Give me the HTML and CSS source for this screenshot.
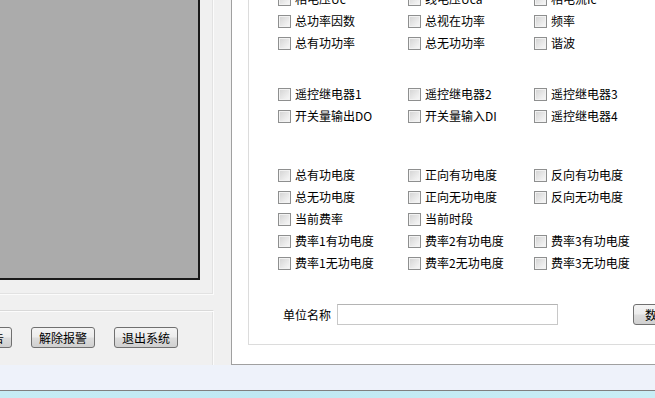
FILE: index.html
```html
<!DOCTYPE html>
<html lang="zh-CN">
<head>
    <meta charset="UTF-8">
    <meta name="viewport" content="width=device-width, initial-scale=1.0">
    <title>参数设置</title>
    <link rel="stylesheet" href="styles.css">
</head>
<body>

    <div class="window">
        <div class="left">
            <div class="view-group">
                <div class="viewer"></div>
            </div>
            <div class="btn-group">
                <button class="btn first">查看报告</button>
                <button class="btn">解除报警</button>
                <button class="btn">退出系统</button>
            </div>
        </div>

        <div class="right">
            <div class="group">
                <div class="grid grid-top">
                    <label class="item"><span class="cb"></span>相电压Uc</label>
                    <label class="item"><span class="cb"></span>线电压Uca</label>
                    <label class="item"><span class="cb"></span>相电流Ic</label>
                    <label class="item"><span class="cb"></span>总功率因数</label>
                    <label class="item"><span class="cb"></span>总视在功率</label>
                    <label class="item"><span class="cb"></span>频率</label>
                    <label class="item"><span class="cb"></span>总有功功率</label>
                    <label class="item"><span class="cb"></span>总无功功率</label>
                    <label class="item"><span class="cb"></span>谐波</label>
                </div>

                <div class="grid grid-relay">
                    <label class="item"><span class="cb"></span>遥控继电器1</label>
                    <label class="item"><span class="cb"></span>遥控继电器2</label>
                    <label class="item"><span class="cb"></span>遥控继电器3</label>
                    <label class="item"><span class="cb"></span>开关量输出DO</label>
                    <label class="item"><span class="cb"></span>开关量输入DI</label>
                    <label class="item"><span class="cb"></span>遥控继电器4</label>
                </div>

                <div class="grid grid-energy">
                    <label class="item"><span class="cb"></span>总有功电度</label>
                    <label class="item"><span class="cb"></span>正向有功电度</label>
                    <label class="item"><span class="cb"></span>反向有功电度</label>
                    <label class="item"><span class="cb"></span>总无功电度</label>
                    <label class="item"><span class="cb"></span>正向无功电度</label>
                    <label class="item"><span class="cb"></span>反向无功电度</label>
                    <label class="item"><span class="cb"></span>当前费率</label>
                    <label class="item"><span class="cb"></span>当前时段</label>
                    <span></span>
                    <label class="item"><span class="cb"></span>费率1有功电度</label>
                    <label class="item"><span class="cb"></span>费率2有功电度</label>
                    <label class="item"><span class="cb"></span>费率3有功电度</label>
                    <label class="item"><span class="cb"></span>费率1无功电度</label>
                    <label class="item"><span class="cb"></span>费率2无功电度</label>
                    <label class="item"><span class="cb"></span>费率3无功电度</label>
                </div>

                <div class="name-row">
                    <span class="name-label">单位名称</span>
                    <input type="text" class="name-input">
                    <button class="btn data-btn">数据查询</button>
                </div>
            </div>
        </div>
    </div>

    <div class="status"></div>
    <div class="desktop"></div>

</body>
</html>
```

FILE: styles.css
```css
* {
    margin: 0;
    padding: 0;
    box-sizing: border-box;
}

html, body {
    width: 655px;
    height: 398px;
    overflow: hidden;
}

body {
    background-color: #f0f0f0;
    font-family: "Noto Sans CJK SC", "DejaVu Sans", sans-serif;
    font-size: 12px;
    color: #000;
}

.window {
    display: flex;
    height: 365px;
    overflow: hidden;
}

/* Left column */
.left {
    width: 231px;
    flex-shrink: 0;
    display: flex;
    flex-direction: column;
}

.view-group {
    width: 214px;
    height: 295px;
    border-right: 1px solid #fbfbfb;
    border-bottom: 1px solid #fbfbfb;
    box-shadow: inset -1px -1px 0 #e2e2e2;
}

.viewer {
    width: 200px;
    height: 280px;
    background-color: #ababab;
    border-right: 2px solid #1a1a1a;
    border-bottom: 2px solid #1a1a1a;
}

.btn-group {
    width: 214px;
    height: 55px;
    margin-top: 15px;
    padding-top: 16px;
    border-top: 1px solid #d9d9d9;
    border-right: 1px solid #fbfbfb;
    box-shadow: inset 0 1px 0 #fcfcfc, inset -1px 0 0 #e2e2e2;
    display: flex;
    gap: 19px;
    align-items: flex-start;
    overflow: hidden;
}

.btn {
    width: 64px;
    height: 21px;
    flex-shrink: 0;
    border: 1px solid #707070;
    border-radius: 3px;
    background: linear-gradient(#f4f4f4, #ececec 48%, #dddddd 52%, #d0d0d0);
    font-family: "Noto Sans CJK SC", sans-serif;
    font-size: 12px;
    color: #000;
    line-height: 18px;
}

.btn.first {
    margin-left: -52px;
}

/* Right panel */
.right {
    flex: 1;
    background: #fff;
    border-left: 1px solid #a0a0a0;
    border-bottom: 1px solid #a0a0a0;
    padding: 0 0 19px 16px;
    display: flex;
    min-width: 0;
}

.group {
    flex: 1;
    border-left: 1px solid #dcdcdc;
    border-bottom: 1px solid #dcdcdc;
    padding-left: 29px;
    overflow: hidden;
}

.grid {
    display: grid;
    grid-template-columns: 130px 126px 126px;
    grid-auto-rows: 22px;
}

.grid-top {
    margin-top: -12px;
}

.grid-relay {
    margin-top: 29px;
}

.grid-energy {
    margin-top: 37px;
}

.item {
    display: flex;
    align-items: center;
    gap: 4px;
    white-space: nowrap;
    line-height: 22px;
}

.cb {
    width: 13px;
    height: 13px;
    flex-shrink: 0;
    border: 1px solid #8e8f8f;
    background: linear-gradient(135deg, #d2d2d2, #eeeeee 70%, #f8f8f8);
    box-shadow: inset 0 0 0 1px #f2f2f2;
}

.name-row {
    margin-top: 30px;
    display: flex;
    align-items: center;
    height: 21px;
    white-space: nowrap;
}

.name-label {
    margin-left: 5px;
    flex-shrink: 0;
}

.name-input {
    width: 221px;
    height: 21px;
    flex-shrink: 0;
    margin-left: 6px;
    border: 1px solid #c8c8c8;
    border-top-color: #b4b4b4;
    background: #fff;
}

.data-btn {
    margin-left: 75px;
    text-align: left;
    padding-left: 11px;
}

/* Status strip and desktop edge */
.status {
    height: 26px;
    background-color: #eef2fa;
    border-bottom: 1px solid #7f7f7f;
}

.desktop {
    height: 7px;
    background: linear-gradient(90deg, #c6ecf5, #bfe8f3 40%, #c9eef6);
}
```
